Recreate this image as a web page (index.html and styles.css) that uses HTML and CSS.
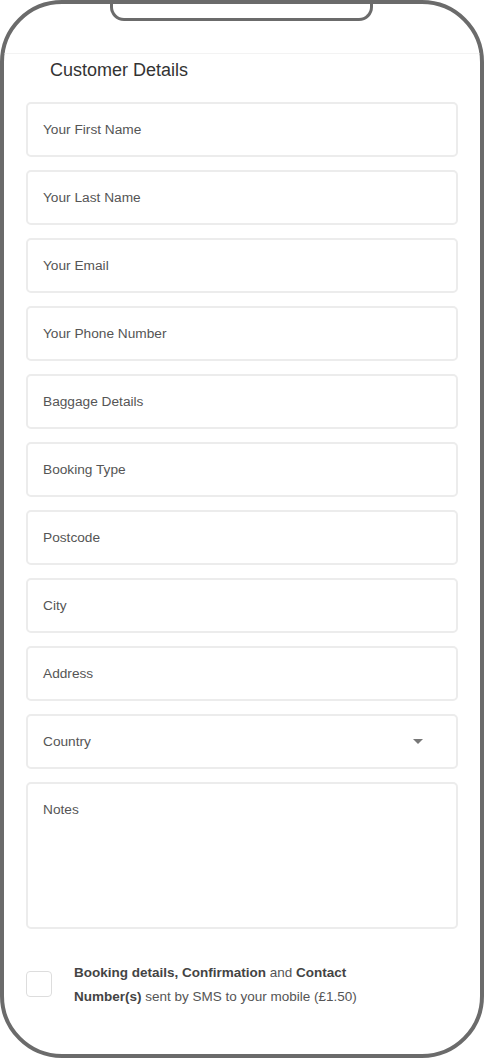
FILE: index.html
```html
<!DOCTYPE html>
<html lang="en">
<head>
<meta charset="utf-8">
<title>Customer Details</title>
<link rel="stylesheet" href="styles.css">
</head>
<body>
<div class="phone">
  <div class="notch"></div>
  <div class="topbar"></div>
  <div class="content">
    <h1 class="title">Customer Details</h1>
    <form class="form">
      <div class="field"><span class="ph">Your First Name</span></div>
      <div class="field"><span class="ph">Your Last Name</span></div>
      <div class="field"><span class="ph">Your Email</span></div>
      <div class="field"><span class="ph">Your Phone Number</span></div>
      <div class="field"><span class="ph">Baggage Details</span></div>
      <div class="field"><span class="ph">Booking Type</span></div>
      <div class="field"><span class="ph">Postcode</span></div>
      <div class="field"><span class="ph">City</span></div>
      <div class="field"><span class="ph">Address</span></div>
      <div class="field select"><span class="ph">Country</span><span class="caret"></span></div>
      <div class="field notes"><span class="ph">Notes</span></div>
      <label class="check">
        <span class="box"></span>
        <span class="check-text"><b>Booking details, Confirmation</b> and <b>Contact Number(s)</b> sent by SMS to your mobile (£1.50)</span>
      </label>
    </form>
  </div>
</div>
</body>
</html>
```
FILE: styles.css
```css
html, body {
  margin: 0;
  padding: 0;
  background: #fff;
}
body {
  font-family: "Liberation Sans", Arial, sans-serif;
  width: 484px;
  height: 1058px;
  overflow: hidden;
}
.phone {
  position: relative;
  box-sizing: border-box;
  width: 484px;
  height: 1058px;
  border: 4px solid #6b6b6b;
  border-radius: 62px;
  overflow: hidden;
  background: #fff;
}
.notch {
  position: absolute;
  top: -4px;
  left: 106px;
  width: 263px;
  height: 21px;
  box-sizing: border-box;
  border: 3px solid #6b6b6b;
  border-top: none;
  border-radius: 0 0 14px 14px;
  background: #fff;
}
.topbar {
  height: 49px;
  border-bottom: 1px solid #f3f3f3;
}
.content {
  padding: 0 22px;
}
.title {
  margin: 6px 0 22px 24px;
  font-size: 18px;
  line-height: 20px;
  font-weight: normal;
  color: #333;
}
.form {
  display: flex;
  flex-direction: column;
  gap: 13px;
}
.field {
  box-sizing: border-box;
  width: 432px;
  height: 55px;
  border: 2px solid #ececec;
  border-radius: 5px;
  padding: 0 15px;
  display: flex;
  align-items: center;
  justify-content: space-between;
}
.ph {
  font-size: 13.7px;
  color: #555;
}
.caret {
  width: 0;
  height: 0;
  border-left: 5px solid transparent;
  border-right: 5px solid transparent;
  border-top: 5px solid #777;
  margin-right: 18px;
}
.field.notes {
  height: 147px;
  align-items: flex-start;
  padding-top: 18px;
}
.check {
  display: flex;
  align-items: flex-start;
  margin-top: 19px;
}
.box {
  flex: none;
  box-sizing: border-box;
  width: 26px;
  height: 26px;
  border: 1.5px solid #ddd;
  border-radius: 4px;
  margin-top: 10px;
}
.check-text {
  margin-left: 22px;
  font-size: 13.5px;
  line-height: 24px;
  color: #555;
  width: 300px;
}
.check-text b {
  color: #444;
}
```
